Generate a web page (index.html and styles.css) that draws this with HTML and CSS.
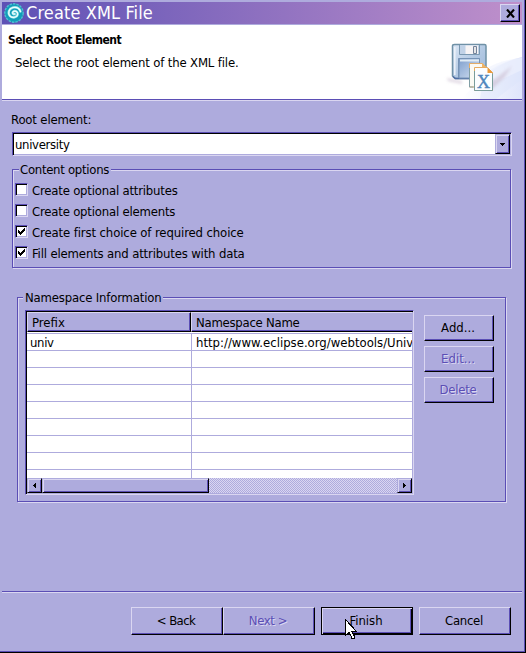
FILE: index.html
```html
<!DOCTYPE html>
<html lang="en">
<head>
<meta charset="utf-8">
<title>Create XML File</title>
<link rel="stylesheet" href="styles.css">
</head>
<body>
<div class="window">
  <header class="titlebar">
    <svg class="app-icon" width="20" height="20" viewBox="0 0 20 20">
      <circle cx="10" cy="10" r="9.2" fill="#109db8" stroke="#4dbfd0" stroke-width="1.400" stroke-dasharray="2.500 1"/>
      <path d="M10.800 11c-1.500.8-3-.8-1.800-2.200 1.900-1.700 5-.3 4.700 2.400-.4 3.300-5.400 4.300-7.700 1.800C3.300 9.800 5 5.500 9 4.500c3.400-.7 6.400.9 7.500 4" fill="none" stroke="#8fe0e6" stroke-width="2.400" stroke-linecap="round"/>
      <path d="M10.800 11c-1.500.8-3-.8-1.800-2.200 1.900-1.700 5-.3 4.700 2.400-.4 3.300-5.400 4.300-7.700 1.800C3.300 9.800 5 5.500 9 4.500c3.400-.7 6.400.9 7.500 4" fill="none" stroke="#f0ffff" stroke-width="1.200" stroke-linecap="round"/>
    </svg>
    <h1 class="title">Create XML File</h1>
    <button class="close" aria-label="Close">
      <svg width="9" height="9" viewBox="0 0 9 9"><path d="M1 .5l7 8M8 .5l-7 8" stroke="#000" stroke-width="2.100"/></svg>
    </button>
  </header>
  <section class="banner">
    <div class="banner-text">
      <h2 class="heading">Select Root Element</h2>
      <p class="hint">Select the root element of the XML file.</p>
    </div>
    <svg class="banner-art" width="80" height="74" viewBox="442 25 80 74">
      <defs>
        <linearGradient id="glow" x1="0" x2="1"><stop offset="0" stop-color="#fff"/><stop offset="1" stop-color="#dfe5fb"/></linearGradient>
        <linearGradient id="disk" x1="0" x2="1" y2="1"><stop offset="0" stop-color="#dbe7f5"/><stop offset=".5" stop-color="#b4cae4"/><stop offset="1" stop-color="#9db8da"/></linearGradient>
        <linearGradient id="label" x1="0" x2="1" y2="1"><stop offset="0" stop-color="#7f9fcd"/><stop offset="1" stop-color="#d5e2f3"/></linearGradient>
        <filter id="soft"><feGaussianBlur stdDeviation="1.5"/></filter>
      </defs>
      <path d="M462 99C480 78 497 63 522 57V99z" fill="url(#glow)"/>
      <path d="M484 76C492 67 503 62 522 57V79L496 99H480z" fill="#dce4fa" opacity=".45"/>
      <path d="M487 68Q500 60 522 58V70L496 82z" fill="#eef1fd" opacity=".6"/>
      <path d="M488 84L512 66 504 78 490 91z M447 78l15 3v3l-14-3z" fill="#c7b8cc" opacity=".55" filter="url(#soft)"/>
      <path d="M454.500 44.500h30q1.500 0 1.500 1.500v31q0 1.500-1.500 1.500h-29.500l-2.500-2.500v-30q0-1.500 2-1.500z" fill="url(#disk)" stroke="#6f91a6" stroke-width="1.500"/>
      <path d="M453 76.500l2.500 2h19" fill="none" stroke="#506ea4" stroke-width="1.500"/>
      <path d="M454.800 47v28" stroke="#edf3fa" stroke-width="1.500"/>
      <path d="M459.500 45v9.500h20V45" fill="#c1d2e7" stroke="#7a98b1"/>
      <path d="M465.500 45.500h12.500v8.500h-12.500z" fill="#f7f4f5"/>
      <path d="M473.500 46.500h3v7h-3z" fill="#e6e6e8" stroke="#74839a"/>
      <path d="M458.500 78V58.500h21V66" fill="url(#label)" stroke="#7693b6"/>
      <path d="M459 58.500h20.500v19.500H459z" fill="url(#label)" stroke="#7693b6"/>
      <path d="M460 59.500h19v2h-19z" fill="#e2edf5"/>
      <path d="M469.500 63.500h13l4 4v19.500h-17z" fill="#fbfaf4" stroke="#e3ad68"/>
      <path d="M482 63l4.500 4.500H482z" fill="#f0b566"/>
      <path d="M469.500 68v19h4" fill="none" stroke="#829fa6"/>
      <path d="M474.500 67.500h13l5 5v18h-18z" fill="#fbfdff" stroke="#e7ac60"/>
      <path d="M474.500 71v19.500h18v-17" fill="none" stroke="#799c9b"/>
      <path d="M487.500 67.500v5.500h5.500z" fill="#e99a3d"/>
      <text x="483.500" y="88" class="banner-letter">X</text>
    </svg>
  </section>
  <main class="content">
    <label class="root-label t15">Root element:</label>
    <div class="combo">
      <span class="combo-value t30">university</span>
      <span class="combo-button"><svg width="5" height="3" viewBox="0 0 5 3" shape-rendering="crispEdges"><path d="M0 0h5v1H4v1H3v1H2V2H1V1H0z"/></svg></span>
    </div>
    <section class="group options">
      <h3 class="legend t28">Content options</h3>
      <div class="checks">
        <div class="check"><i class="box"></i><span class="t20">Create optional attributes</span></div>
        <div class="check"><i class="box"></i><span class="t20">Create optional elements</span></div>
        <div class="check"><i class="box"><svg width="7" height="7" viewBox="0 0 7 7" shape-rendering="crispEdges"><path d="M0 2h1v1h1v1h1v-1h1v-1h1v-1h1v-1h1v3h-1v1h-1v1h-1v1h-1v1h-1v-1h-1v-1h-1z"/></svg></i><span class="t12">Create first choice of required choice</span></div>
        <div class="check"><i class="box"><svg width="7" height="7" viewBox="0 0 7 7" shape-rendering="crispEdges"><path d="M0 2h1v1h1v1h1v-1h1v-1h1v-1h1v-1h1v3h-1v1h-1v1h-1v1h-1v1h-1v-1h-1v-1h-1z"/></svg></i><span class="t15">Fill elements and attributes with data</span></div>
      </div>
    </section>
    <section class="group namespaces">
      <h3 class="legend t18">Namespace Information</h3>
      <div class="namespace-body">
        <div class="table">
          <div class="thead"><div class="th first">Prefix</div><div class="th last t25">Namespace Name</div></div>
          <div class="rows">
            <div class="row"><span class="cell t30">univ</span><span class="cell">http://www.eclipse.org/webtools/Univ</span></div>
            <div class="row"><span class="cell"></span><span class="cell"></span></div>
            <div class="row"><span class="cell"></span><span class="cell"></span></div>
            <div class="row"><span class="cell"></span><span class="cell"></span></div>
            <div class="row"><span class="cell"></span><span class="cell"></span></div>
            <div class="row"><span class="cell"></span><span class="cell"></span></div>
            <div class="row"><span class="cell"></span><span class="cell"></span></div>
            <div class="row"><span class="cell"></span><span class="cell"></span></div>
            <div class="row"><span class="cell"></span><span class="cell"></span></div>
          </div>
          <div class="scrollbar">
            <span class="arrow"><svg width="3" height="5" viewBox="0 0 3 5" shape-rendering="crispEdges"><path d="M2 0h1v5H2V4H1V3H0V2h1V1h1z"/></svg></span>
            <span class="thumb"></span>
            <span class="arrow end"><svg width="3" height="5" viewBox="0 0 3 5" shape-rendering="crispEdges"><path d="M0 0h1v1h1v1h1v1H2v1H1v1H0z"/></svg></span>
          </div>
        </div>
        <div class="actions">
          <button class="btn">Add...</button>
          <button class="btn" disabled>Edit...</button>
          <button class="btn t28" disabled>Delete</button>
        </div>
      </div>
    </section>
  </main>
  <footer class="footer">
    <button class="btn t50">&lt; Back</button>
    <button class="btn t40" disabled>Next &gt;</button>
    <button class="btn default">Finish</button>
    <button class="btn t28 cancel">Cancel</button>
  </footer>
</div>
<svg class="cursor" width="12" height="21" viewBox="0 0 12 21" shape-rendering="crispEdges"><path d="M.5.5v16l3.500-3.500 3 6.500h2.500v-2l-2.500-5h4.500z" fill="#fff" stroke="#000"/></svg>
</body>
</html>
```
FILE: styles.css
```css
:root {
  --face: #aeabdd;
  --light: #dad6f1;
  --shade: #5b4eb5;
}
* { box-sizing: border-box; }
body {
  margin: 0;
  width: 526px;
  height: 653px;
  overflow: hidden;
  position: relative;
  font: 13px/16px "DejaVu Sans Condensed", "DejaVu Sans", sans-serif;
  color: #000;
}
h1, h2, h3, p { margin: 0; font-size: inherit; font-weight: normal; }
button { font: inherit; color: inherit; padding: 0; border-radius: 0; }
svg { display: block; }

.t12 { letter-spacing: -.12px; }
.t15 { letter-spacing: -.16px; }
.t18 { letter-spacing: -.18px; }
.t20 { letter-spacing: -.2px; }
.t25 { letter-spacing: -.25px; }
.t28 { letter-spacing: -.28px; }
.t30 { letter-spacing: -.32px; }
.t40 { letter-spacing: -.4px; }
.t50 { letter-spacing: -.6px; }

.window {
  width: 526px;
  height: 653px;
  padding: 2px 2px 0;
  background: var(--face);
  border: solid #000;
  border-width: 0 1px 1px 0;
  box-shadow: inset -1px -1px 0 var(--shade);
  display: flex;
  flex-direction: column;
}
.titlebar {
  width: 520px;
  height: 22px;
  padding: 0 2px;
  display: flex;
  align-items: center;
  background: linear-gradient(90deg, #5d51b5, #bf90cb);
}
.title {
  flex: 1;
  margin-left: 2px;
  font-size: 18px;
  line-height: 22px;
  letter-spacing: .12px;
  color: #fff;
}
.close {
  width: 20px;
  height: 18px;
  background: var(--face);
  border: 1px solid;
  border-color: var(--light) #000 #000 var(--light);
  box-shadow: inset -1px -1px 0 var(--shade);
  display: flex;
  align-items: center;
  justify-content: center;
}
.banner {
  width: 520px;
  height: 75px;
  margin-top: 1px;
  background: #fff;
  border-bottom: 1px solid var(--shade);
  box-shadow: 0 1px 0 var(--light);
  display: flex;
  justify-content: space-between;
}
.banner-text { padding: 7px 0 0 6px; }
.heading { font-size: 12px; font-weight: bold; letter-spacing: -.54px; }
.hint { margin: 7px 0 0 7px; letter-spacing: -.15px; }
.banner-letter {
  font: 18px "Liberation Serif", serif;
  fill: #4f86bd;
  stroke: #4f86bd;
  stroke-width: .4px;
  text-anchor: middle;
}

.content { width: 510px; padding: 12px 0 0 10px; height: 491px; }
.root-label { display: block; width: 100px; margin-left: -1px; }
.combo {
  width: 500px;
  height: 24px;
  margin-top: 4px;
  background: #fff;
  border: 1px solid;
  border-color: var(--shade) var(--light) var(--light) var(--shade);
  box-shadow: inset 1px 1px 0 #000, inset -1px -1px 0 var(--face);
  padding: 1px;
  display: flex;
  justify-content: space-between;
}
.combo-value { padding: 3px 0 0 1px; }
.combo-button, .arrow {
  width: 15px;
  background: var(--face);
  border: 1px solid;
  border-color: var(--face) #000 #000 var(--face);
  box-shadow: inset 1px 1px 0 var(--light), inset -1px -1px 0 var(--shade);
  display: flex;
  align-items: center;
  justify-content: center;
}
.combo-button { height: 20px; }

.group {
  border: 1px solid var(--shade);
  box-shadow: 1px 1px 0 var(--light), inset 1px 1px 0 var(--light);
}
.legend {
  width: max-content;
  margin: -8px 0 0 6px;
  padding: 0 2px 0 1px;
  background: var(--face);
}
.options { width: 499px; height: 99px; margin-top: 13px; }
.checks { padding: 2px 0 0 2px; display: grid; grid-auto-rows: 21px; }
.check { display: flex; align-items: center; gap: 4px; }
.box {
  width: 13px;
  height: 13px;
  margin-top: -3px;
  background: #fff;
  border: 1px solid;
  border-color: var(--shade) var(--light) var(--light) var(--shade);
  box-shadow: inset 1px 1px 0 #000, inset -1px -1px 0 var(--face);
  display: flex;
  align-items: center;
  justify-content: center;
}

.namespaces { width: 489px; height: 205px; margin: 29px 0 0 5px; }
.namespaces .legend { margin-left: 5px; padding-left: 2px; }
.namespace-body { display: flex; gap: 10px; padding: 4px 0 0 7px; }
.table {
  width: 389px;
  height: 185px;
  background: #fff;
  border: 1px solid;
  border-color: var(--shade) var(--light) var(--light) var(--shade);
  box-shadow: inset 1px 1px 0 #000, inset -1px -1px 0 var(--face);
  padding: 1px;
}
.thead { display: flex; height: 20px; }
.th {
  background: var(--face);
  border: 1px solid;
  border-color: var(--light) #000 #000 var(--light);
  box-shadow: inset -1px -1px 0 var(--shade);
  padding: 2px 0 0 4px;
  line-height: 15px;
}
.th.first { width: 164px; }
.th.last { flex: 1; border-right: 0; box-shadow: inset 0 -1px 0 var(--shade); }
.rows { height: 146px; overflow: hidden; padding-top: 1px; }
.row {
  height: 17px;
  border-top: 1px solid var(--face);
  display: grid;
  grid-template-columns: 165px 1fr;
}
.cell { overflow: hidden; white-space: nowrap; padding-left: 3px; line-height: 17px; height: 16px; }
.cell:first-child { border-right: 1px solid var(--face); }
.cell:last-child { padding-left: 4px; }
.scrollbar {
  height: 15px;
  display: flex;
  background: repeating-conic-gradient(var(--face) 0 25%, var(--light) 0 50%) 0 0 / 2px 2px;
}
.thumb {
  width: 167px;
  background: var(--face);
  border: 1px solid;
  border-color: var(--face) #000 #000 var(--face);
  box-shadow: inset 1px 1px 0 var(--light), inset -1px -1px 0 var(--shade);
}
.arrow.end { margin-left: auto; }

.actions { display: grid; grid-auto-rows: 26px; gap: 5px; width: 70px; padding-top: 5px; height: 93px; }
.btn {
  background: var(--face);
  border: 1px solid;
  border-color: var(--light) #000 #000 var(--light);
  box-shadow: inset -1px -1px 0 var(--shade);
  padding-right: 2px;
}
.btn:disabled { color: var(--shade); text-shadow: 1px 1px 0 var(--light); }
.footer {
  width: 520px;
  height: 60px;
  border-top: 1px solid var(--shade);
  box-shadow: inset 0 1px 0 var(--light);
  padding: 15px 11px 0 0;
  display: flex;
  justify-content: flex-end;
}
.footer .btn { width: 92px; height: 28px; }
.footer .default {
  margin: 0 6px;
  border-color: #000;
  box-shadow: inset 1px 1px 0 var(--light), inset -1px -1px 0 #000, inset -2px -2px 0 var(--shade);
}
.cursor { position: absolute; left: 345px; top: 619px; }
```
